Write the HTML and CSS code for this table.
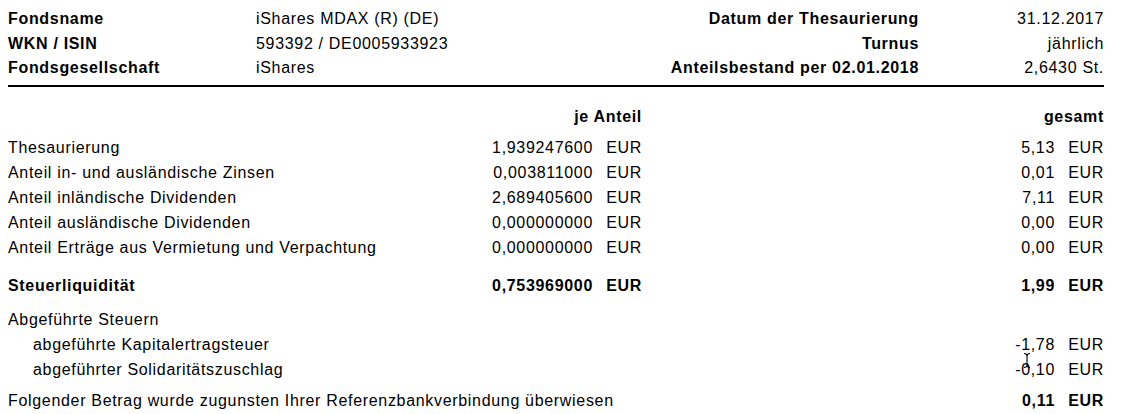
FILE: index.html
```html
<!DOCTYPE html>
<html lang="de">
<head>
<meta charset="utf-8">
<title>Thesaurierung</title>
<link rel="stylesheet" href="styles.css">
</head>
<body>
<div class="page">
  <section class="info">
    <div class="info-label">Fondsname</div>
    <div class="info-value">iShares MDAX (R) (DE)</div>
    <div class="info-label right">Datum der Thesaurierung</div>
    <div class="info-value right">31.12.2017</div>

    <div class="info-label">WKN / ISIN</div>
    <div class="info-value">593392 / DE0005933923</div>
    <div class="info-label right">Turnus</div>
    <div class="info-value right">jährlich</div>

    <div class="info-label">Fondsgesellschaft</div>
    <div class="info-value">iShares</div>
    <div class="info-label right">Anteilsbestand per 02.01.2018</div>
    <div class="info-value right">2,6430 St.</div>
  </section>

  <div class="rule"></div>

  <section class="ledger">
    <div class="row head">
      <span class="hd col-anteil">je Anteil</span>
      <span class="hd col-gesamt">gesamt</span>
    </div>

    <div class="group items">
      <div class="row"><span class="lbl">Thesaurierung</span><span class="amt">1,939247600</span><span class="cur">EUR</span><span class="amt">5,13</span><span class="cur">EUR</span></div>
      <div class="row"><span class="lbl">Anteil in- und ausländische Zinsen</span><span class="amt">0,003811000</span><span class="cur">EUR</span><span class="amt">0,01</span><span class="cur">EUR</span></div>
      <div class="row"><span class="lbl">Anteil inländische Dividenden</span><span class="amt">2,689405600</span><span class="cur">EUR</span><span class="amt">7,11</span><span class="cur">EUR</span></div>
      <div class="row"><span class="lbl">Anteil ausländische Dividenden</span><span class="amt">0,000000000</span><span class="cur">EUR</span><span class="amt">0,00</span><span class="cur">EUR</span></div>
      <div class="row"><span class="lbl">Anteil Erträge aus Vermietung und Verpachtung</span><span class="amt">0,000000000</span><span class="cur">EUR</span><span class="amt">0,00</span><span class="cur">EUR</span></div>
    </div>

    <div class="row strong liquidity"><span class="lbl">Steuerliquidität</span><span class="amt">0,753969000</span><span class="cur">EUR</span><span class="amt">1,99</span><span class="cur">EUR</span></div>

    <div class="group taxes">
      <div class="row tight"><span class="lbl">Abgeführte Steuern</span></div>
      <div class="row"><span class="lbl sub">abgeführte Kapitalertragsteuer</span><span class="amt col-g">-1,78</span><span class="cur">EUR</span></div>
      <div class="row"><span class="lbl sub">abgeführter Solidaritätszuschlag</span><span class="amt col-g">-0,10</span><span class="cur">EUR</span></div>
    </div>

    <div class="row transfer"><span class="lbl wide">Folgender Betrag wurde zugunsten Ihrer Referenzbankverbindung überwiesen</span><span class="amt col-g strong-txt">0,11</span><span class="cur strong-txt">EUR</span></div>
  </section>

  <svg class="ibeam" width="10" height="17" viewBox="0 0 10 17" aria-hidden="true">
    <path d="M2 1.5 Q5 1.5 5 4 Q5 1.5 8 1.5 M5 4 V13 M2 15.5 Q5 15.5 5 13 Q5 15.5 8 15.5" fill="none" stroke="#000" stroke-width="1.1"/>
  </svg>
</div>
</body>
</html>
```

FILE: styles.css
```css
html, body {
  margin: 0;
  padding: 0;
  background: #ffffff;
}

body {
  font-family: "Liberation Sans", Arial, sans-serif;
  font-size: 16px;
  letter-spacing: 0.68px;
  color: #000000;
}

.page {
  position: relative;
  width: 1096px;
  padding: 7px 0 0 8px;
}

/* ---------- header info block ---------- */
.info {
  display: grid;
  grid-template-columns: 248px 1fr auto 185px;
  grid-auto-rows: 24.5px;
  line-height: 24.5px;
  white-space: nowrap;
}

.info-label {
  font-weight: bold;
}

.info-value {
  font-weight: normal;
}

.info .right {
  text-align: right;
}

.rule {
  height: 2px;
  background: #000000;
  margin-top: 4.5px;
}

/* ---------- ledger ---------- */
.ledger {
  display: flex;
  flex-direction: column;
  margin-top: 17px;
}

.row {
  display: grid;
  grid-template-columns: 465px 120px 49px 413px 49px;
  line-height: 25px;
  height: 25px;
  white-space: nowrap;
}

.row.tight {
  line-height: 24px;
  height: 24px;
}

.lbl {
  grid-column: 1;
}

.lbl.sub {
  padding-left: 25px;
}

.lbl.wide {
  grid-column: 1 / 4;
}

.amt,
.cur {
  text-align: right;
}

.col-g {
  grid-column: 4;
}

.hd {
  font-weight: bold;
  text-align: right;
}

.col-anteil {
  grid-column: 2 / 4;
}

.col-gesamt {
  grid-column: 4 / 6;
}

.items {
  margin-top: 6px;
}

.liquidity {
  margin-top: 13px;
}

.strong,
.strong-txt {
  font-weight: bold;
}

.taxes {
  margin-top: 10px;
}

.transfer {
  margin-top: 6px;
}

/* mouse text cursor that appears over the content */
.ibeam {
  position: absolute;
  left: 1022px;
  top: 352px;
}
```
